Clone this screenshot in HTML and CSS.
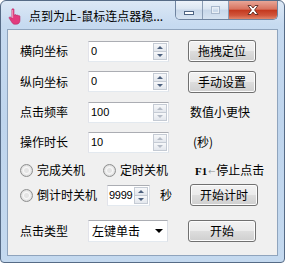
FILE: index.html
```html
<!DOCTYPE html>
<html lang="zh-CN">
<head>
  <meta charset="UTF-8" />
  <title>点到为止-鼠标连点器稳定版</title>
  <link rel="stylesheet" href="styles.css">
</head>
<body>
  <div class="window">
    <div class="titlebar">
      <!-- 粉色手指图标 -->
      <svg class="app-icon" viewBox="0 0 16 16" width="17" height="17">
        <path d="M4.6 1.4c0-1 2-1 2 0V6.8l.5-.2c.4-.6 1.6-.5 1.7.3.5-.5 1.6-.3 1.7.4.6-.4 1.7-.1 1.7.8v3.6c0 2-1.4 3.6-3.5 3.6H7.4c-1.2 0-2.1-.6-2.8-1.7L2.1 9.7c-.6-.8.5-1.8 1.3-1.1l1.2 1.1z" fill="#e23b7e" stroke="#b52360" stroke-width=".5"/>
        <path d="M5.3 1.8v7.6" stroke="#f79bbd" stroke-width=".9" fill="none"/>
      </svg>
      <span class="title">点到为止-鼠标连点器稳...</span>
      <div class="caption-buttons">
        <span class="cap cap-min"><i></i></span>
        <span class="cap cap-max"><i></i></span>
        <span class="cap cap-close">
          <svg viewBox="0 0 14 12" width="14" height="12">
            <path d="M2 1.5h3l2 2.5 2-2.5h3L8.6 6 12 10.5H9L7 8l-2 2.5H2L5.4 6z" fill="#fff" stroke="#5b2a22" stroke-width=".9"/>
          </svg>
        </span>
      </div>
    </div>

    <div class="client">
      <div class="row row-1">
        <span class="label">横向坐标</span>
        <div class="spin-field">
          <span class="field-text">0</span>
          <span class="spinner"><b class="up"></b><b class="down"></b></span>
        </div>
        <button class="btn">拖拽定位</button>
      </div>

      <div class="row row-2">
        <span class="label">纵向坐标</span>
        <div class="spin-field">
          <span class="field-text">0</span>
          <span class="spinner"><b class="up"></b><b class="down"></b></span>
        </div>
        <button class="btn">手动设置</button>
      </div>

      <div class="row row-3">
        <span class="label">点击频率</span>
        <div class="spin-field">
          <span class="field-text">100</span>
          <span class="spinner disabled"><b class="up"></b><b class="down"></b></span>
        </div>
        <span class="note">数值小更快</span>
      </div>

      <div class="row row-4">
        <span class="label">操作时长</span>
        <div class="spin-field">
          <span class="field-text">10</span>
          <span class="spinner disabled"><b class="up"></b><b class="down"></b></span>
        </div>
        <span class="note note-sec">(秒)</span>
      </div>

      <div class="row row-5">
        <label class="radio radio-done"><span class="dot"></span>完成关机</label>
        <label class="radio radio-timer"><span class="dot"></span>定时关机</label>
        <span class="note note-hotkey"><em class="fkey">F1</em><small>←</small>停止点击</span>
      </div>

      <div class="row row-6">
        <label class="radio radio-count"><span class="dot"></span>倒计时关机</label>
        <div class="spin-field small">
          <span class="field-text narrow">9999</span>
          <span class="spinner"><b class="up"></b><b class="down"></b></span>
        </div>
        <span class="unit">秒</span>
        <button class="btn">开始计时</button>
      </div>

      <div class="row row-7">
        <span class="label">点击类型</span>
        <div class="combo">
          <span>左键单击</span>
          <i class="combo-arrow"></i>
        </div>
        <button class="btn">开始</button>
      </div>
    </div>
  </div>
</body>
</html>
```

FILE: styles.css
```css
* {
  box-sizing: border-box;
}

body {
  margin: 0;
  background: #ffffff;
  font-family: "Noto Sans CJK SC", "Noto Sans", sans-serif;
  font-size: 12px;
  color: #000;
}

/* 窗口外框 */
.window {
  width: 285px;
  height: 263px;
  border: 1px solid #566b86;
  border-radius: 6px 6px 4px 4px;
  background: linear-gradient(#dce8f5, #c6daf0 24px, #bfd5ed 120px, #c4d9ef);
  overflow: hidden;
}

.titlebar {
  height: 28px;
  display: flex;
  align-items: center;
  padding-left: 6px;
}

.app-icon {
  flex: none;
  margin-top: 2px;
}

.title {
  margin-left: 5px;
  margin-top: 2px;
  line-height: 1;
  color: #000;
  white-space: nowrap;
}

.caption-buttons {
  align-self: flex-start;
  margin-left: auto;
  margin-right: 6px;
  display: flex;
  height: 19px;
  border: 1px solid #6f84a0;
  border-top: none;
  border-radius: 0 0 5px 5px;
  overflow: hidden;
}

.cap {
  display: flex;
  align-items: center;
  justify-content: center;
  height: 100%;
}

.cap-min,
.cap-max {
  background: linear-gradient(#edf3fa, #dbe6f2 45%, #c8d7e9 50%, #d6e3f1);
  border-right: 1px solid #8a9cb4;
}

.cap-min {
  width: 27px;
}

.cap-min i {
  width: 10px;
  height: 4px;
  margin-top: 5px;
  background: #fff;
  border: 1px solid #4f6583;
}

.cap-max {
  width: 26px;
}

.cap-max i {
  width: 9px;
  height: 8px;
  border: 1px solid #a9b8cc;
  box-shadow: inset 0 0 0 1px #e9eff6;
}

.cap-close {
  width: 48px;
  background: linear-gradient(#e8a697, #d8735f 45%, #c4391f 52%, #d1563c 80%, #e0866b);
}

/* 客户区 */
.client {
  margin: 0 6px;
  height: 227px;
  border: 1px solid #8fa4bd;
  background: #f0f0f0;
  padding: 6px 0 0 12px;
}

.row {
  display: flex;
  align-items: center;
}

.row-1 { height: 30px; }
.row-2 { height: 31px; }
.row-3 { height: 30px; }
.row-4 { height: 30px; }
.row-5 { height: 26px; }
.row-6 { height: 24px; }
.row-7 { height: 47px; }

.label {
  width: 68px;
  line-height: 1;
}

.spin-field {
  display: flex;
  align-items: center;
  width: 81px;
  height: 21px;
  background: #fff;
  border: 1px solid #abadb3;
  border-color: #abadb3 #dbdfe6 #e3e9ef #e2e3ea;
}

.spin-field.small {
  width: 43px;
  margin-left: 10px;
}

.field-text {
  flex: 1;
  padding-left: 2px;
  font-family: "Liberation Sans", sans-serif;
  font-size: 11px;
  line-height: 1;
}

.field-text.narrow {
  font-family: "Liberation Sans Narrow", "Liberation Sans", sans-serif;
  letter-spacing: -0.3px;
  padding-left: 1px;
}

.spinner {
  display: flex;
  flex-direction: column;
  width: 14px;
  height: 17px;
  margin-right: 1px;
  border: 1px solid #c5cbd4;
  background: #f4f6f9;
}

.spinner b {
  flex: 1;
  display: flex;
  align-items: center;
  justify-content: center;
  background: linear-gradient(#f7f8fa, #e3e7ed);
}

.spinner b + b {
  border-top: 1px solid #c5cbd4;
}

.spinner b::after {
  content: "";
  border-left: 3px solid transparent;
  border-right: 3px solid transparent;
}

.spinner .up::after {
  border-bottom: 3px solid #4c607e;
}

.spinner .down::after {
  border-top: 3px solid #4c607e;
}

.spinner.disabled .up::after {
  border-bottom-color: #b5bcc7;
}

.spinner.disabled .down::after {
  border-top-color: #b5bcc7;
}

/* 按钮 */
.btn {
  margin-left: 19px;
  width: 68px;
  height: 22px;
  padding: 0;
  font-family: inherit;
  font-size: 12px;
  line-height: 1;
  color: #000;
  border: 1px solid #707070;
  border-radius: 3px;
  background: linear-gradient(#f2f2f2, #ebebeb 48%, #dddddd 52%, #cfcfcf);
  box-shadow: inset 0 0 0 1px #fcfcfc;
}

.note {
  margin-left: 21px;
  line-height: 1;
  white-space: nowrap;
}

.note-sec {
  margin-left: 24px;
}

.note-hotkey {
  margin-left: 14px;
}

.fkey {
  font-style: normal;
  font-family: "Liberation Serif", serif;
  font-weight: bold;
  font-size: 11px;
}

.note-hotkey small {
  font-size: 7px;
  color: #888;
  margin: 0 1px;
  vertical-align: 1px;
}

/* 单选框 */
.radio {
  display: flex;
  align-items: center;
  line-height: 1;
  white-space: nowrap;
}

.radio-done {
  width: 83px;
}

.radio-timer {
  width: 78px;
}

.dot {
  width: 13px;
  height: 13px;
  margin-right: 4px;
  border-radius: 50%;
  border: 1px solid #8e8f8f;
  background: radial-gradient(circle, #e4e4e4 0 2px, #f7f7f7 3px, #dcdcdc 5.5px);
}

.unit {
  margin-left: 10px;
  line-height: 1;
}

.row-6 .btn {
  margin-left: 18px;
}

/* 下拉框 */
.combo {
  display: flex;
  align-items: center;
  justify-content: space-between;
  width: 80px;
  height: 22px;
  padding: 0 4px 0 3px;
  background: #fff;
  border: 1px solid #abadb3;
  border-color: #abadb3 #dbdfe6 #e3e9ef #e2e3ea;
  line-height: 1;
}

.combo-arrow {
  border-left: 4px solid transparent;
  border-right: 4px solid transparent;
  border-top: 4px solid #000;
}

.row-7 .btn {
  margin-left: 20px;
}
```
